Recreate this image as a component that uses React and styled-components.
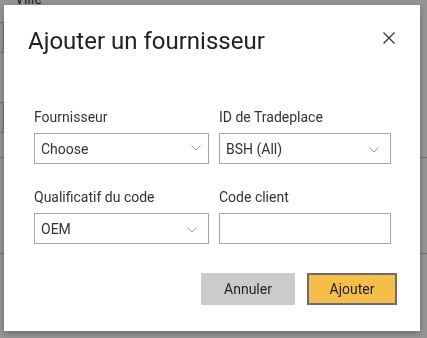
import React from "react";
import styled, { createGlobalStyle } from "styled-components";

const Global = createGlobalStyle`
  html, body { margin: 0; padding: 0; background: #fff; }
  body { font-family: Roboto, "Liberation Sans", Arial, sans-serif; overflow: hidden; }
  * { box-sizing: border-box; }
`;

const Page = styled.div`
  width: 427px;
  height: 338px;
  overflow: hidden;
  display: flex;
  flex-direction: column;
`;

const PageLabel = styled.div`
  margin: -10px 0 0 15px;
  font-size: 14px;
  line-height: 18px;
  color: #333;
`;

const PageInput = styled.div`
  width: 104px;
  height: 31px;
  margin-left: -100px;
  margin-top: ${(p) => p.$top}px;
  border: 1px solid #c4c4c4;
`;

const PageRule = styled.div`
  height: 1px;
  background: #c4c4c4;
  margin-top: ${(p) => p.$top}px;
`;

const Overlay = styled.div`
  position: fixed;
  inset: 0;
  background: rgba(0, 0, 0, 0.42);
  padding: 5px 0 0 4px;
`;

const Modal = styled.div`
  width: 416px;
  height: 326px;
  background: #fff;
  box-shadow: 0 2px 6px rgba(0, 0, 0, 0.3);
  display: flex;
  flex-direction: column;
`;

const Header = styled.div`
  display: flex;
  align-items: flex-start;
  justify-content: space-between;
  padding: 21px 25px 0 24px;
`;

const Title = styled.h2`
  margin: 0;
  font-size: 24px;
  line-height: 30px;
  font-weight: 400;
  color: #222;
`;

const Close = styled.button`
  border: 0;
  background: none;
  padding: 0;
  margin-top: 6px;
  width: 12px;
  height: 12px;
  display: flex;
  cursor: pointer;
`;

const Form = styled.div`
  display: grid;
  grid-template-columns: 175px 172px;
  column-gap: 10px;
  row-gap: 24px;
  padding: 52px 0 0 30px;
`;

const Field = styled.div`
  display: flex;
  flex-direction: column;
  gap: 7px;
`;

const Label = styled.label`
  font-size: 14px;
  line-height: 18px;
  color: #333;
`;

const Box = styled.div`
  height: 31px;
  border: 1px solid #a6a6a6;
  display: flex;
  align-items: center;
  justify-content: space-between;
  padding: 0 ${(p) => p.$chevPad}px 0 6px;
  font-size: 14px;
  color: #333;
  background: #fff;
`;

const Chevron = styled.svg`
  width: 10px;
  height: 6px;
  margin-top: ${(p) => p.$dy}px;
`;

const Footer = styled.div`
  display: flex;
  justify-content: flex-end;
  gap: 12px;
  padding: 29px 23px 0 0;
`;

const Button = styled.button`
  height: 32px;
  width: ${(p) => p.$w}px;
  font-family: inherit;
  font-size: 14px;
  color: #222;
  border: ${(p) => (p.$primary ? "2px solid #6b6b6b" : "0")};
  background: ${(p) => (p.$primary ? "#f5bd4a" : "#cbcbcb")};
  cursor: pointer;
`;

function Select({ value, pad = 7, dy = 0 }) {
  return (
    <Box $chevPad={pad}>
      <span>{value}</span>
      <Chevron $dy={dy} viewBox="0 0 10 6">
        <path d="M0.5 0.5 L5 5 L9.5 0.5" fill="none" stroke="#9a9a9a" strokeWidth="1" />
      </Chevron>
    </Box>
  );
}

export default function App() {
  return (
    <>
      <Global />
      <Page>
        <PageLabel>Ville</PageLabel>
        <PageInput $top={14} />
        <PageInput $top={49} />
        <PageRule $top={24} />
        <PageRule $top={95} />
      </Page>
      <Overlay>
        <Modal>
          <Header>
            <Title>Ajouter un fournisseur</Title>
            <Close aria-label="Fermer">
              <svg width="12" height="12" viewBox="0 0 12 12">
                <path d="M0.5 0.5 L11.5 11.5 M11.5 0.5 L0.5 11.5" stroke="#333" strokeWidth="1.2" />
              </svg>
            </Close>
          </Header>
          <Form>
            <Field>
              <Label>Fournisseur</Label>
              <Select value="Choose" pad={7} dy={-2} />
            </Field>
            <Field>
              <Label>ID de Tradeplace</Label>
              <Select value="BSH (All)" pad={11} dy={3} />
            </Field>
            <Field>
              <Label>Qualificatif du code</Label>
              <Select value="OEM" pad={11} dy={3} />
            </Field>
            <Field>
              <Label>Code client</Label>
              <Box />
            </Field>
          </Form>
          <Footer>
            <Button $w={94}>Annuler</Button>
            <Button $w={90} $primary>Ajouter</Button>
          </Footer>
        </Modal>
      </Overlay>
    </>
  );
}
